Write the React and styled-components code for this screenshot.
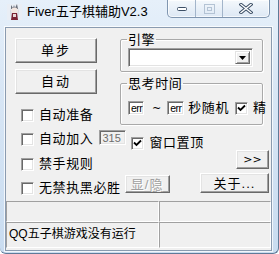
import React from 'react';
import styled, { createGlobalStyle } from 'styled-components';

const Global = createGlobalStyle`
  html, body { margin: 0; padding: 0; background: #ffffff; }
  body { font-family: "Liberation Sans", "Noto Sans CJK SC", sans-serif; }
  #root { width: 279px; height: 254px; overflow: hidden; }
`;

const CJK = `"Liberation Sans", "Noto Sans CJK SC", sans-serif`;

const Window = styled.div`
  box-sizing: border-box;
  width: 279px;
  height: 254px;
  padding: 0 6px 2px 5px;
  display: flex;
  flex-direction: column;
  background: linear-gradient(180deg, #e6f0fa 0%, #d8e6f5 35%, #c9dcf0 100%);
  border-right: 1px solid #5f7a98;
  border-bottom: 1px solid #5f7a98;
  border-bottom-right-radius: 6px;
  border-bottom-left-radius: 6px;
`;

const TitleBar = styled.div`
  height: 27px;
  display: flex;
  align-items: flex-start;
  flex-shrink: 0;
`;

const AppIcon = styled.svg`
  width: 15px;
  height: 16px;
  margin: 4px 0 0 2px;
  flex-shrink: 0;
`;

const Title = styled.div`
  margin: 4px 0 0 5px;
  font-family: ${CJK};
  font-size: 13px;
  line-height: 16px;
  color: #000;
  white-space: nowrap;
`;

const Caption = styled.div`
  margin-left: auto;
  margin-right: 2px;
  display: flex;
  height: 17px;
  border: 1px solid #8096b0;
  border-top: none;
  border-radius: 0 0 5px 5px;
  overflow: hidden;
  background: linear-gradient(180deg, #f4f8fc 0%, #dde8f4 100%);
  box-shadow: inset 0 0 0 1px rgba(255,255,255,0.7);
`;

const CapBtn = styled.div`
  width: ${p => p.$w}px;
  display: flex;
  align-items: center;
  justify-content: center;
  border-left: ${p => (p.$first ? 'none' : '1px solid #a3b5ca')};
`;

const Client = styled.div`
  flex: 1;
  display: flex;
  flex-direction: column;
  background: #f0f0f0;
  border: 1px solid #8a9bb0;
  box-shadow: 0 0 0 1px rgba(255,255,255,0.75);
  font-family: ${CJK};
  font-size: 13px;
  color: #000;
`;

const Top = styled.div`
  display: flex;
  height: 97px;
`;

const LeftCol = styled.div`
  width: 105px;
  padding: 10px 0 0 9px;
  display: flex;
  flex-direction: column;
  align-items: flex-start;
`;

const RightCol = styled.div`
  width: 143px;
  padding-top: 5px;
  display: flex;
  flex-direction: column;
`;

const Button = styled.div`
  box-sizing: border-box;
  width: ${p => p.$w}px;
  height: ${p => p.$h}px;
  margin-top: ${p => p.$mt || 0}px;
  margin-left: ${p => p.$ml || 0}px;
  display: flex;
  align-items: center;
  justify-content: center;
  background: #f0f0f0;
  border: 1px solid;
  border-color: #ffffff #696969 #696969 #ffffff;
  box-shadow: inset -1px -1px 0 #a0a0a0, inset 1px 1px 0 #e3e3e3;
  color: ${p => (p.$disabled ? '#a0a0a0' : '#000')};
  text-shadow: ${p => (p.$disabled ? '1px 1px 0 #ffffff' : 'none')};
  font-family: ${p => (p.$latin ? '"DejaVu Sans", sans-serif' : CJK)};
  font-size: ${p => (p.$latin ? '11px' : '13px')};
  letter-spacing: ${p => p.$ls || 0}px;
  line-height: 1;
  flex-shrink: 0;
`;

const CheckRow = styled.div`
  display: flex;
  align-items: center;
  margin-top: ${p => p.$mt || 0}px;
  margin-left: ${p => p.$ml || 0}px;
  flex-shrink: 0;
`;

const Box = styled.div`
  box-sizing: border-box;
  width: 13px;
  height: 13px;
  background: #ffffff;
  border: 1px solid;
  border-color: #a0a0a0 #ffffff #ffffff #a0a0a0;
  box-shadow: inset 1px 1px 0 #696969, inset -1px -1px 0 #e3e3e3;
  display: flex;
  align-items: center;
  justify-content: center;
  flex-shrink: 0;
`;

const Label = styled.span`
  margin-left: ${p => p.$ml ?? 5}px;
  font-size: 13px;
  line-height: 14px;
  letter-spacing: 0.6px;
  white-space: nowrap;
`;

const Group = styled.fieldset`
  margin: ${p => p.$mt || 0}px 0 0 0;
  padding: ${p => p.$pt}px 9px ${p => p.$pb}px 7px;
  border: 1px solid #a9a9a9;
  border-radius: 2px;
  box-shadow: inset 1px 1px 0 #ffffff, 1px 1px 0 #ffffff;
  min-width: 0;
`;

const Legend = styled.legend`
  padding: 0 1px;
  margin-left: -1px;
  font-size: 13px;
  line-height: 13px;
  letter-spacing: 0.6px;
`;

const Combo = styled.div`
  box-sizing: border-box;
  height: 19px;
  display: flex;
  justify-content: flex-end;
  align-items: stretch;
  background: #ffffff;
  border: 1px solid;
  border-color: #a0a0a0 #ffffff #ffffff #a0a0a0;
  box-shadow: inset 1px 1px 0 #696969, inset -1px -1px 0 #e3e3e3;
  padding: 2px 2px 2px 0;
`;

const DropBtn = styled.div`
  box-sizing: border-box;
  width: 15px;
  display: flex;
  align-items: center;
  justify-content: center;
  background: #f0f0f0;
  border: 1px solid;
  border-color: #e3e3e3 #696969 #696969 #e3e3e3;
  box-shadow: inset 1px 1px 0 #ffffff, inset -1px -1px 0 #a0a0a0;
`;

const TimeRow = styled.div`
  display: flex;
  align-items: center;
  height: 14px;
`;

const Edit = styled.div`
  box-sizing: border-box;
  width: ${p => p.$w}px;
  height: ${p => p.$h}px;
  margin-left: ${p => p.$ml || 0}px;
  margin-top: ${p => p.$mt || 0}px;
  background: ${p => (p.$disabled ? '#f0f0f0' : '#ffffff')};
  border: 1px solid;
  border-color: #a0a0a0 #ffffff #ffffff #a0a0a0;
  box-shadow: inset 1px 1px 0 #696969, inset -1px -1px 0 #e3e3e3;
  padding: 0 0 0 ${p => p.$pl ?? 2}px;
  overflow: hidden;
  font-family: "Liberation Sans", sans-serif;
  font-size: ${p => p.$fs || 11}px;
  letter-spacing: ${p => p.$ls || 0}px;
  line-height: ${p => p.$h - 1}px;
  color: ${p => (p.$disabled ? '#6d6d6d' : '#000')};
  white-space: nowrap;
  flex-shrink: 0;
`;

const Tilde = styled.span`
  margin-left: 8px;
  font-family: "DejaVu Sans", sans-serif;
  font-size: 11px;
`;

const Row = styled.div`
  display: flex;
  align-items: flex-start;
  height: ${p => p.$h}px;
  margin-top: ${p => p.$mt || 0}px;
  padding-left: 15px;
  padding-right: 2px;
  flex-shrink: 0;
`;

const Push = styled.div`
  margin-left: auto;
`;

const StatusBar = styled.div`
  display: flex;
  height: ${p => p.$h}px;
  margin-top: ${p => p.$mt || 0}px;
  flex-shrink: 0;
`;

const Panel = styled.div`
  box-sizing: border-box;
  width: ${p => p.$w}px;
  flex: ${p => (p.$w ? '0 0 auto' : '1')};
  border: 1px solid;
  border-color: #a0a0a0 #ffffff #ffffff #a0a0a0;
  padding-left: 2px;
  display: flex;
  align-items: center;
  font-size: 12px;
  line-height: 14px;
  white-space: nowrap;
  padding-bottom: 3px;
`;

const Check = () => (
  <svg width="9" height="9" viewBox="0 0 9 9">
    <path d="M1 3.5 L3.5 6 L8 1.5" fill="none" stroke="#000" strokeWidth="1.8" />
  </svg>
);

export default function App() {
  return (
    <>
      <Global />
      <Window>
        <TitleBar>
          <AppIcon viewBox="0 0 15 16">
            <rect x="0" y="0" width="15" height="16" fill="#e9eef5" />
            <path d="M4 1 L6 4 L7 1 L8 4 L10 0 L11 5 L4 5 Z" fill="#6a6f7a" />
            <ellipse cx="7.5" cy="6.5" rx="3.2" ry="3" fill="#f2e6e0" />
            <path d="M3 4 L5 10 L4 14 L3 8 Z" fill="#d8dbe2" />
            <path d="M12 4 L10 10 L11 14 L12 8 Z" fill="#d8dbe2" />
            <path d="M5 9 L10 9 L11 16 L4 16 Z" fill="#7a2233" />
            <rect x="6" y="10" width="3" height="3" fill="#e8d6d6" />
          </AppIcon>
          <Title>Fiver五子棋辅助V2.3</Title>
          <Caption>
            <CapBtn $w={27} $first>
              <svg width="12" height="6" viewBox="0 0 12 6">
                <rect x="1.5" y="1.5" width="9" height="3" rx="1" fill="#ffffff" stroke="#3c4f66" />
              </svg>
            </CapBtn>
            <CapBtn $w={26}>
              <svg width="11" height="10" viewBox="0 0 11 10">
                <rect x="0.5" y="0.5" width="10" height="9" fill="none" stroke="#b4c3d4" />
                <rect x="3.5" y="3.5" width="4" height="3" fill="none" stroke="#b4c3d4" />
              </svg>
            </CapBtn>
            <CapBtn $w={46}>
              <svg width="14" height="11" viewBox="0 0 14 11">
                <path d="M2 1.5 L12 9.5 M12 1.5 L2 9.5" stroke="#3c4f66" strokeWidth="3.4" strokeLinecap="square" />
                <path d="M2 1.5 L12 9.5 M12 1.5 L2 9.5" stroke="#ffffff" strokeWidth="1.4" strokeLinecap="square" />
              </svg>
            </CapBtn>
          </Caption>
        </TitleBar>
        <Client>
          <Top>
            <LeftCol>
              <Button $w={82} $h={25} $ls={2}>单步</Button>
              <Button $w={82} $h={25} $mt={6} $ls={2}>自动</Button>
              <CheckRow $mt={14} $ml={6}>
                <Box />
                <Label>自动准备</Label>
              </CheckRow>
            </LeftCol>
            <RightCol>
              <Group $pt={2} $pb={4}>
                <Legend>引擎</Legend>
                <Combo>
                  <DropBtn>
                    <svg width="7" height="4" viewBox="0 0 7 4">
                      <path d="M0 0 L7 0 L3.5 4 Z" fill="#000" />
                    </svg>
                  </DropBtn>
                </Combo>
              </Group>
              <Group $mt={5} $pt={11} $pb={9}>
                <Legend>思考时间</Legend>
                <TimeRow>
                  <Edit $w={16} $h={14} $pl={2} $fs={10.5} $ls={-0.5}>err</Edit>
                  <Tilde>~</Tilde>
                  <Edit $w={17} $h={14} $ml={6} $pl={2} $fs={10.5} $ls={-0.5}>err</Edit>
                  <Label $ml={4}>秒随机</Label>
                  <CheckRow $ml={6}>
                    <Box><Check /></Box>
                    <Label $ml={5}>精</Label>
                  </CheckRow>
                </TimeRow>
              </Group>
            </RightCol>
          </Top>
          <Row $h={20} $mt={5}>
            <CheckRow $mt={2}>
              <Box />
              <Label>自动加入</Label>
            </CheckRow>
            <Edit $w={27} $h={15} $ml={6} $disabled>315</Edit>
            <CheckRow $mt={6} $ml={5}>
              <Box><Check /></Box>
              <Label>窗口置顶</Label>
            </CheckRow>
          </Row>
          <Row $h={23}>
            <CheckRow $mt={7}>
              <Box />
              <Label>禁手规则</Label>
            </CheckRow>
            <Push />
            <Button $w={33} $h={19} $latin>&gt;&gt;</Button>
          </Row>
          <Row $h={20}>
            <CheckRow $mt={8}>
              <Box />
              <Label>无禁执黑必胜</Label>
            </CheckRow>
            <Button $w={45} $h={18} $mt={2} $ml={4} $disabled $ls={1}>显/隐</Button>
            <Push />
            <Button $w={69} $h={20} $ls={1}>关于...</Button>
          </Row>
          <StatusBar $h={21} $mt={8}>
            <Panel $w={153} />
            <Panel />
          </StatusBar>
          <StatusBar $h={26}>
            <Panel $w={153}>QQ五子棋游戏没有运行</Panel>
            <Panel />
          </StatusBar>
        </Client>
      </Window>
    </>
  );
}
